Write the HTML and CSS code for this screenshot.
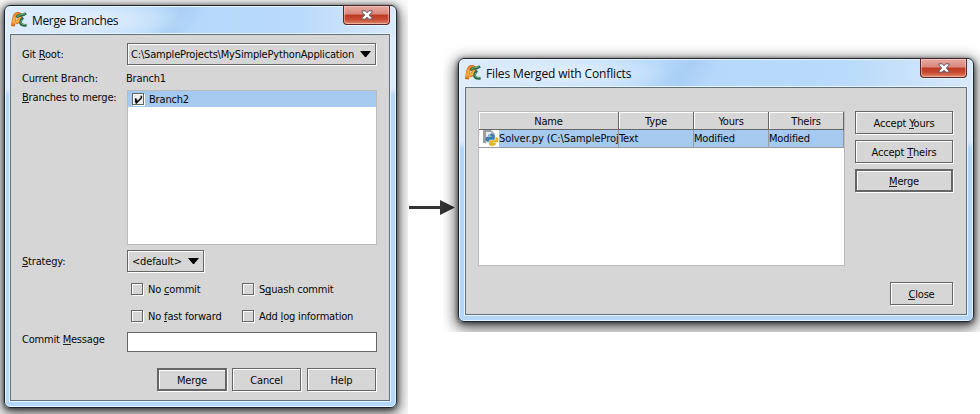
FILE: index.html
```html
<!DOCTYPE html>
<html lang="en">
<head>
<meta charset="utf-8">
<title>Merge Branches</title>
<link rel="stylesheet" href="styles.css">
</head>
<body>
<svg class="defs" width="0" height="0">
  <defs>
    <linearGradient id="orange" x1="0" y1="0" x2="0" y2="1"><stop offset="0" stop-color="#f58a28"/><stop offset=".6" stop-color="#ffb545"/><stop offset="1" stop-color="#e06a18"/></linearGradient>
    <symbol id="logo" viewBox="0 0 16 16">
      <path d="M1.900 14.200 L3.300 6 Q4 2 7 2 Q9.800 2.200 9.200 5.500 Q8.500 9.800 5 10.200" fill="none" stroke="#c9611c" stroke-width="4"/>
      <path d="M2 13.800 L3.300 6 Q4 2.200 7 2.200 Q9.500 2.500 9 5.500 Q8.300 9.500 5 10" fill="none" stroke="url(#orange)" stroke-width="3"/>
      <path d="M5.500 5.300 Q7 3.500 9 3.200 Q12.500 3.500 15 1.300" fill="none" stroke="#2b6448" stroke-width="2.800"/>
      <path d="M6 4.800 Q8 2.600 10 2.700 L14.200 1.600" fill="none" stroke="#5fa574" stroke-width="1.200"/>
      <path d="M12 5.500 Q9.300 8.500 9.500 11 Q10.500 14 15.600 13.200" fill="none" stroke="#2c6b4c" stroke-width="2.700"/>
      <path d="M11 7.500 Q9.600 9.500 10 11 Q11.200 12.900 14.600 12.600" fill="none" stroke="#6cb17e" stroke-width="1"/>
    </symbol>
    <symbol id="cross" viewBox="0 0 12 10">
      <path d="M1 .8h3.2L6 2.8 7.8.8H11v1.5L8.2 5 11 7.7v1.5H7.8L6 7.2 4.2 9.2H1V7.7L3.8 5 1 2.3z" fill="#fff" stroke="#5c5560" stroke-width="1"/>
    </symbol>
  </defs>
</svg>

<main class="scene">
  <div class="stage stage-left">
    <section class="window window-left">
      <header class="titlebar">
        <svg class="logo" width="16" height="16"><use href="#logo"/></svg>
        <h1 class="title title-left">Merge Branches</h1>
        <button class="window-close"><svg width="12" height="10"><use href="#cross"/></svg></button>
      </header>
      <div class="pane form">
        <div class="row row-root"><label>Git <u>R</u>oot:</label>
          <div class="combo combo-root"><span class="path">C:\SampleProjects\MySimplePythonApplication</span><i class="caret"></i></div></div>
        <div class="row row-current"><label>Current Branch:</label><span class="branch">Branch1</span></div>
        <div class="row row-list"><label><u>B</u>ranches to merge:</label>
          <div class="list"><div class="list-item"><span class="check"><svg width="9" height="9" viewBox="0 0 9 9"><path d="M1.700 3.200v4.300M2.500 4.500v3.300L7.300 3V.8" fill="none" stroke="#111" stroke-width="1.600"/></svg></span><span>Branch2</span></div></div></div>
        <div class="row row-strategy"><label><u>S</u>trategy:</label>
          <div class="combo combo-strategy"><span>&lt;default&gt;</span><i class="caret"></i></div></div>
        <div class="options">
          <div class="option"><span class="check"></span><span>No <u>c</u>ommit</span></div>
          <div class="option"><span class="check"></span><span>S<u>q</u>uash commit</span></div>
          <div class="option"><span class="check"></span><span>No <u>f</u>ast forward</span></div>
          <div class="option"><span class="check"></span><span>Add <u>l</u>og information</span></div>
        </div>
        <div class="row row-message"><label>Commit <u>M</u>essage</label><input class="field" type="text"></div>
        <footer class="buttons"><button class="button primary">Merge</button><button class="button">Cancel</button><button class="button">Help</button></footer>
      </div>
    </section>
  </div>

  <svg class="arrow" width="46" height="16" viewBox="0 0 46 16"><path d="M0 6h31V0l15 7.5L31 15V9H0z" fill="#333"/></svg>

  <div class="stage stage-right">
    <section class="window window-right">
      <header class="titlebar">
        <svg class="logo" width="16" height="16"><use href="#logo"/></svg>
        <h1 class="title title-right">Files Merged with Conflicts</h1>
        <button class="window-close"><svg width="12" height="10"><use href="#cross"/></svg></button>
      </header>
      <div class="pane conflicts">
        <div class="table">
          <div class="thead"><span>Name</span><span>Type</span><span>Yours</span><span>Theirs</span></div>
          <div class="trow">
            <span class="file"><i class="file-icon"><svg width="16" height="16" viewBox="0 0 16 16">
              <path d="M2 0h7l3 3v11H2z" fill="#e9edf0"/><path d="M0 15V0h8v2H3v11H0z" fill="#9aa0a3"/><path d="M8 0l4 4H8z" fill="#a9b1b5"/>
              <path d="M5.3 5.500q0-1.800 3.500-1.800 3 0 3 1.800v3q0 1.200-1.300 1.200H7q-1 0-1.200 2H4.300Q2.500 11.400 2.500 9t2-2.300h4.300V6.200H5.300z" fill="#3c7eaf"/>
              <path d="M12.500 7h1q2 .3 2 2.800t-2 2.700H9.600v.6h3.200v1.200q-.3 1.700-3.200 1.700-3.600 0-3.600-1.700v-2.500q0-1.600 1.500-1.600H11q1.500 0 1.500-1.500z" fill="#e2b62c"/>
              <circle cx="6.900" cy="5.200" r=".6" fill="#fff"/></svg></i><span class="file-name">Solver.py (C:\SampleProj</span></span>
            <span>Text</span><span>Modified</span><span>Modified</span>
          </div>
        </div>
        <aside class="actions">
          <button class="button"><span>Accept <u>Y</u>ours</span></button>
          <button class="button"><span>Accept <u>T</u>heirs</span></button>
          <button class="button primary"><span><u>M</u>erge</span></button>
          <button class="button close"><span><u>C</u>lose</span></button>
        </aside>
      </div>
    </section>
  </div>
</main>
</body>
</html>
```
FILE: styles.css
```css
* { box-sizing: border-box; }
body { margin: 0; background: #fff; overflow: hidden; color: #080808; font: 11px/14px "DejaVu Sans Condensed", "DejaVu Sans", sans-serif; font-stretch: condensed; letter-spacing: -.18px; }
button { font: inherit; letter-spacing: inherit; color: inherit; margin: 0; padding: 0; }
u { text-decoration: none; background: linear-gradient(#222, #222) 0 11px / 100% 1px no-repeat; }
.defs { display: block; height: 0; }
.scene { display: flex; width: 980px; height: 414px; }
.stage { overflow: hidden; flex: none; }
.stage-left { width: 408px; height: 414px; padding: 5px 0 0 4px; }
.stage-right { width: 537px; height: 289px; margin: 43px 0 0 -12px; padding: 15px 0 0 15px; }
.arrow { flex: none; margin: 200px 0 0 1px; }

.window {
  display: flex; flex-direction: column; padding: 0 6px 6px; border: 1px solid #1c2530; border-radius: 6px;
  background:
    radial-gradient(ellipse 100px 20px at 22% 14px, #e2effc, transparent),
    linear-gradient(120deg, transparent 38%, #a9cff5 44%, transparent 50%) 0 0 / 100% 29px no-repeat,
    linear-gradient(90deg, #e0edfb, #b5d8fb 40%, #b9dafa 75%, #d8e9fa) 0 0 / 100% 29px no-repeat,
    linear-gradient(#dcebfb 0, #dcebfb 82px, #b3d6f9 90px);
  box-shadow: inset 0 0 0 1px #e9f5ff, 0 1px 5px rgba(0,0,0,.65), 0 4px 14px 3px rgba(0,0,0,.6);
}
.window-left { width: 393px; height: 403px; padding-left: 5px; }
.window-right { width: 516px; height: 264px; }
.titlebar { display: flex; flex: none; height: 28px; padding: 6px 0 0 1px; }
.window-right .titlebar { padding-left: 0; }
.logo { flex: none; }
.title { margin: 0 0 0 5px; flex: 1; font: 12px/17px "Open Sans", "Noto Sans", sans-serif; white-space: nowrap; letter-spacing: -.14px; }
.title-left { letter-spacing: -.35px; }
.window-close { width: 47px; height: 20px; margin-top: -7px; display: flex; align-items: center; justify-content: center; border: 1px solid #57262a; border-top: 1px solid #46262b; border-radius: 0 0 4px 4px; background: linear-gradient(#e7aaa0, #d9877b 45%, #bd3a24 50%, #c94b32 75%, #df8a6b); box-shadow: inset 0 0 0 1px rgba(255,220,210,.5), 0 1px 0 #e8f4ff; }
.pane { flex: 1; min-height: 0; background: #d6d6d6; border: 1px solid #5f7080; box-shadow: 0 0 0 1px #e9f5ff; }

.form { padding: 8px 12px 9px; }
.row { display: grid; grid-template-columns: 104px 1fr; white-space: nowrap; }
.row label { margin-left: -1px; }
.row-root { height: 27px; }
.row-root label { padding-top: 5px; }
.row-current { height: 20px; padding-top: 2px; }
.row-list { height: 160px; }
.row-strategy { height: 33px; }
.row-strategy label { padding-top: 5px; }
.row-list label { padding-top: 1px; }
.branch { margin-left: -1px; }
.combo { display: flex; align-items: center; justify-content: space-between; width: 249px; height: 22px; padding: 0 4px 0 3px; border: 1px solid #666; box-shadow: inset 1px 1px #fff, 1px 1px #fff; }
.combo span, .list-item > span:last-child { padding-top: 2px; }
.combo-strategy { width: 77px; padding-left: 4px; }
.caret { width: 11px; height: 6px; background: #000; clip-path: polygon(0 0, 100% 0, 55% 100%, 45% 100%); }
.list { height: 155px; background: #fff; border: 1px solid #bbb; }
.list-item { display: flex; align-items: center; gap: 5px; height: 16px; padding-left: 4px; background: #a6c9ef; }
.check { flex: none; width: 12px; height: 12px; border: 1px solid #666; box-shadow: inset 1px 1px #fff, 1px 1px #fff; }
.check svg { display: block; margin: 1px; }
.list .check { background: #eee; }
.options { display: grid; grid-template-columns: 111px 1fr; grid-auto-rows: 27px; margin-left: 108px; height: 49px; white-space: nowrap; }
.option { display: flex; align-items: flex-start; gap: 5px; }
.row-message { height: 36px; }
.row-message label { padding-top: 1px; letter-spacing: -.2px; }
.field { width: 250px; height: 20px; border: 1px solid #666; background: #fff; padding: 0 4px; margin: 0; }
.buttons { display: flex; gap: 6px; justify-content: flex-end; padding-right: 1px; }
.button { display: flex; align-items: center; justify-content: center; white-space: pre; width: 69px; height: 23px; padding-top: 2px; background: #d6d6d6; border: 1px solid #666; border-radius: 0; box-shadow: inset 1px 1px #fff, 1px 1px #fff; }
.button.primary { border-width: 2px; width: 70px; margin-right: -1px; }

.conflicts { display: flex; padding: 23px 12px 9px; gap: 10px; }
.table { width: 367px; height: 155px; background: #fff; border: 1px solid #bbb; }
.thead, .trow { display: grid; grid-template-columns: 140px 75px 75px 75px; }
.thead { height: 18px; background: #d6d6d6; border-bottom: 1px solid #666; text-align: center; line-height: 19px; }
.thead span { height: 17px; border-right: 1px solid #666; box-shadow: inset 1px 1px #fff; }
.trow { height: 18px; background: #a6c9ef; border-bottom: 1px solid #999; line-height: 18px; white-space: nowrap; }
.trow > span { height: 17px; border-right: 1px solid #999; overflow: hidden; }
.file { display: flex; }
.file-icon { flex: none; width: 20px; height: 17px; padding-left: 4px; background: #fff; }
.file-icon svg { display: block; }
.file-name { letter-spacing: -.08px; }
.actions { display: flex; flex-direction: column; width: 98px; }
.actions .button { flex: none; width: 98px; margin: 0 0 6px; }
.actions .close { width: 63px; margin: auto 0 0 auto; }
```
